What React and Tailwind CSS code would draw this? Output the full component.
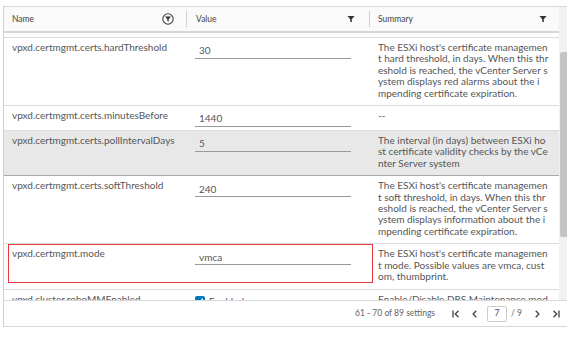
import React from "react";

const font = { fontFamily: "Lato, 'Open Sans', sans-serif" };

function Funnel({ className = "" }) {
  return (
    <svg width="8" height="8" viewBox="0 0 8 8" className={className}>
      <path d="M0.5 1 H7.5 L4.8 4.2 V7.2 L3.2 6.4 V4.2 Z" fill="#333" />
    </svg>
  );
}

function CircleFunnel() {
  return (
    <svg width="12" height="12" viewBox="0 0 12 12">
      <circle cx="6" cy="6" r="5.2" fill="none" stroke="#444" strokeWidth="1.1" />
      <path d="M3 3.6 H9 L6.7 6.2 V8.6 L5.3 7.9 V6.2 Z" fill="#333" />
    </svg>
  );
}

function ValueInput({ value }) {
  return (
    <div className="w-[156px] h-[17px] border-b border-[#9a9a9a] flex items-center pl-[4px] pt-[2px] text-[#565656]">
      {value}
    </div>
  );
}

function Row({ name, value, summary, gray, bottomDark }) {
  return (
    <div
      className={`flex border-b ${bottomDark ? "border-[#a8a8a8]" : "border-[#dcdcdc]"} ${gray ? "bg-[#e8e8e8]" : "bg-white"}`}
    >
      <div className="w-[182px] shrink-0 pl-[8px] pt-[4px] pb-[6px] leading-[11.4px] whitespace-nowrap">
        {name}
      </div>
      <div className="w-[183px] shrink-0 pl-[9px] pt-[4px] pb-[3px] leading-[11.4px]">
        {value}
      </div>
      <div className="w-[189px] shrink-0 pl-[9px] pt-[4px] pb-[6px] leading-[11.4px] whitespace-nowrap">
        {summary.map((l, i) => (
          <div key={i}>{l}</div>
        ))}
      </div>
    </div>
  );
}

function PagerIcon({ d, bar }) {
  return (
    <svg width="10" height="10" viewBox="0 0 10 10">
      {bar && <path d={bar} stroke="#444" strokeWidth="1.3" fill="none" />}
      <path d={d} stroke="#444" strokeWidth="1.3" fill="none" strokeLinejoin="miter" />
    </svg>
  );
}

export default function App() {
  return (
    <div className="w-[567px] h-[337px] bg-white relative overflow-hidden text-[10px] text-[#565656]" style={font}>
      <div className="ml-[3px] mt-[6px] border-l border-[#cfcfcf] w-[564px]">
        <div className="flex h-[294px] border-t border-[#d8d8d8]">
          <div className="w-[555px] flex flex-col">
            {/* header */}
            <div className="flex h-[26px] bg-[#fafafa] border-b-2 border-[#d6d6d6] items-center text-[8.5px] text-[#444]">
              <div className="w-[182px] flex items-center pl-[8px] pr-[12px] justify-between">
                <span>Name</span>
                <CircleFunnel />
              </div>
              <div className="w-px h-[16px] bg-[#d0d0d0]" />
              <div className="w-[182px] flex items-center pl-[9px] pr-[14px] justify-between">
                <span>Value</span>
                <Funnel />
              </div>
              <div className="w-px h-[16px] bg-[#d0d0d0]" />
              <div className="w-[189px] flex items-center pl-[8px] pr-[12px] justify-between">
                <span>Summary</span>
                <Funnel />
              </div>
            </div>
            {/* body */}
            <div className="flex-1 overflow-hidden">
              <div className="h-[5px] border-b border-[#dcdcdc]" />
              <Row
                name="vpxd.certmgmt.certs.hardThreshold"
                value={<ValueInput value="30" />}
                summary={[
                  "The ESXi host's certificate managemen",
                  "t hard threshold, in days. When this thr",
                  "eshold is reached, the vCenter Server s",
                  "ystem displays red alarms about the i",
                  "mpending certificate expiration.",
                ]}
              />
              <Row
                name="vpxd.certmgmt.certs.minutesBefore"
                value={<ValueInput value="1440" />}
                summary={["--"]}
              />
              <Row
                name="vpxd.certmgmt.certs.pollIntervalDays"
                value={<ValueInput value="5" />}
                gray
                bottomDark
                summary={[
                  "The interval (in days) between ESXi ho",
                  "st certificate validity checks by the vCe",
                  "nter Server system",
                ]}
              />
              <Row
                name="vpxd.certmgmt.certs.softThreshold"
                value={<ValueInput value="240" />}
                summary={[
                  "The ESXi host's certificate managemen",
                  "t soft threshold, in days. When this thr",
                  "eshold is reached, the vCenter Server s",
                  "ystem displays information about the i",
                  "mpending certificate expiration.",
                ]}
              />
              <Row
                name="vpxd.certmgmt.mode"
                value={<ValueInput value="vmca" />}
                summary={[
                  "The ESXi host's certificate managemen",
                  "t mode. Possible values are vmca, cust",
                  "om, thumbprint.",
                ]}
              />
              <Row
                name="vpxd.cluster.roboMMEnabled"
                value={
                  <div className="flex items-center gap-[4px] pt-[2px]">
                    <div className="w-[10px] h-[10px] rounded-[2px] bg-[#0079b8] flex items-center justify-center">
                      <svg width="8" height="8" viewBox="0 0 8 8">
                        <path d="M1.2 4 L3.2 6 L6.8 1.8" stroke="white" strokeWidth="1.4" fill="none" />
                      </svg>
                    </div>
                    <span>Enabled</span>
                  </div>
                }
                summary={["Enable/Disable DRS Maintenance mod"]}
              />
            </div>
          </div>
          {/* scrollbar */}
          <div className="w-[9px] bg-[#f1f1f1] flex flex-col">
            <div className="h-[45px]" />
            <div className="h-[185px] w-[8px] ml-[1px] bg-[#c4c4c4] rounded-[2px]" />
          </div>
        </div>
        {/* footer */}
        <div className="h-[27px] border-t border-b border-[#d8d8d8] flex items-center justify-end text-[8.5px] text-[#666] pr-[6px]">
          <span className="mr-[16px]">61 - 70 of 89 settings</span>
          <div className="mr-[9px] flex items-center">
            <PagerIcon bar="M2 1.5 V8.5" d="M7.5 1.8 L4.3 5 L7.5 8.2" />
          </div>
          <div className="mr-[7px] flex items-center">
            <PagerIcon d="M6.3 1.8 L3.1 5 L6.3 8.2" />
          </div>
          <div className="w-[20px] h-[16px] border border-[#cccccc] rounded-[2px] flex items-center justify-center text-[#444] text-[8.5px] mr-[4px]">
            7
          </div>
          <span className="mr-[10px] text-[#666]">/ 9</span>
          <div className="mr-[9px] flex items-center">
            <PagerIcon d="M3.7 1.8 L6.9 5 L3.7 8.2" />
          </div>
          <div className="flex items-center">
            <PagerIcon bar="M8 1.5 V8.5" d="M2.5 1.8 L5.7 5 L2.5 8.2" />
          </div>
        </div>
      </div>
      {/* highlight annotation */}
      <div className="absolute left-[8px] top-[244px] w-[365px] h-[39px] border-[1.5px] border-[#e8383d] pointer-events-none" />
    </div>
  );
}
